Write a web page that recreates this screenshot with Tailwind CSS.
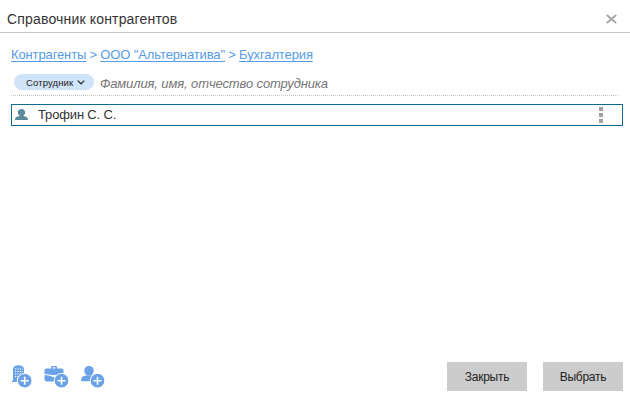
<!DOCTYPE html>
<html lang="ru">
<head>
<meta charset="utf-8">
<title>Справочник контрагентов</title>
<script src="https://cdn.jsdelivr.net/npm/@tailwindcss/browser@4"></script>
</head>
<body class="bg-white">
<div class="flex h-[402px] w-[630px] flex-col overflow-hidden bg-white font-['Liberation_Sans',Arial,sans-serif] text-[13px] text-[#333]">
  <header class="flex h-[33px] shrink-0 items-center justify-between border-b border-[#c6c6c6] pt-[6px] pr-[13px] pl-[7px]">
    <h1 class="text-[14px] leading-[18px] tracking-[0.17px] whitespace-nowrap">Справочник контрагентов</h1>
    <svg class="mb-[1px] h-[10px] w-[11px]" viewBox="0 0 11 10" fill="none" stroke="#a6a6a6" stroke-width="2"><path d="M.8 .9 10.200 9.100M10.200 .9 .8 9.100"/></svg>
  </header>
  <nav class="mt-[13px] ml-[11px] flex h-[18px] shrink-0 items-center gap-[3px] tracking-[-0.12px] whitespace-nowrap text-[#559be6]">
    <a class="underline underline-offset-2">Контрагенты</a>
    <span class="px-[0.3px]">&gt;</span>
    <a class="underline underline-offset-2">ООО "Альтернатива"</a>
    <span class="px-[0.3px]">&gt;</span>
    <a class="underline underline-offset-2">Бухгалтерия</a>
  </nav>
  <div class="mt-[9px] mr-[12px] ml-[11px] flex h-[23px] shrink-0 items-start border-b border-dotted border-[#c4c4c4] pl-[3px]">
    <button class="mt-[1px] flex h-[16px] w-[80px] items-center gap-[4px] rounded-full bg-[#cfe3f9] pl-[12px] text-[9.5px] tracking-[0.12px] whitespace-nowrap text-[#222]">
      <span class="pt-[2px]">Сотрудник</span>
      <svg class="h-[5px] w-[8px] shrink-0" viewBox="0 0 8 5" fill="none" stroke="#333" stroke-width="1.3"><path d="M.7.6 4 3.8 7.3.6"/></svg>
    </button>
    <span class="ml-[6px] leading-[21px] tracking-[-0.12px] whitespace-nowrap text-[#757575] italic">Фамилия, имя, отчество сотрудника</span>
  </div>
  <div class="mt-[8px] mr-[7px] ml-[11px] flex h-[22px] shrink-0 items-center border border-[#0b6b96] pr-[19px] pl-[3px]">
    <svg class="mb-px h-[11px] w-[13px]" viewBox="0 0 12 11" preserveAspectRatio="none" fill="#5b8a9c"><path d="M6 0C8 0 9.400 1.300 9.400 3.500 9.400 5 8.400 6.200 7.600 7 10 7.500 12 8 12 11H0C0 8 2 7.500 4.400 7 3.600 6.200 2.600 5 2.600 3.500 2.600 1.300 4 0 6 0Z"/></svg>
    <span class="ml-[10px] grow tracking-[-0.15px]">Трофин С. С.</span>
    <span class="flex flex-col gap-[2px]"><i class="size-[4px] bg-[#a0a0a0]"></i><i class="size-[4px] bg-[#a0a0a0]"></i><i class="size-[4px] bg-[#a0a0a0]"></i></span>
  </div>
  <footer class="mt-auto mb-[11px] flex h-[29px] shrink-0 items-start pr-[7px] pl-[11px]">
    <svg class="mt-[2px] h-[25px] w-[96px]" viewBox="0 0 96 25" fill="#69a2e7">
      <path d="M3 3Q3.500 1.200 7.500 1.200T12 3l1 1V17H9v-3H6v4H1v-1.200h1V4z"/>
      <path stroke="#fff" stroke-width="1" stroke-dasharray="1.200 1.200" d="M4 5h8M4 7.500h8M4 10h8M4 12.500h5"/>
      <path d="M40 4.500V3q0-1 1-1h4q1 0 1 1v1.500h4.500q2 0 2 2V10l-8 1h-3l-8-1V6.500q0-2 2-2zM33.500 11l7 1v1h4v-1h8v5.500H36q-2.500 0-2.500-2z"/>
      <path fill="#fff" d="M41.500 3.300h3v1.200h-3z"/>
      <ellipse cx="78" cy="6.800" rx="4.700" ry="4.900"/><path d="M70 17.300q0-5.500 5-5.800h7v5.800z"/>
      <g stroke="#fff" stroke-width="1"><circle cx="13.700" cy="16.700" r="7.300"/><circle cx="50.500" cy="16.700" r="7.300"/><circle cx="86.500" cy="16.700" r="7.300"/></g>
      <path stroke="#fff" stroke-width="1.600" d="M9.700 16.700h8M13.700 12.700v8M46.500 16.700h8M50.500 12.700v8M82.500 16.700h8M86.500 12.700v8"/>
    </svg>
    <div class="ml-auto flex gap-[16px] text-[12px] tracking-[-0.27px] text-[#222]">
      <button class="h-[29px] w-[80px] bg-[#ccc]">Закрыть</button>
      <button class="h-[29px] w-[80px] bg-[#ccc]">Выбрать</button>
    </div>
  </footer>
</div>
</body>
</html>
